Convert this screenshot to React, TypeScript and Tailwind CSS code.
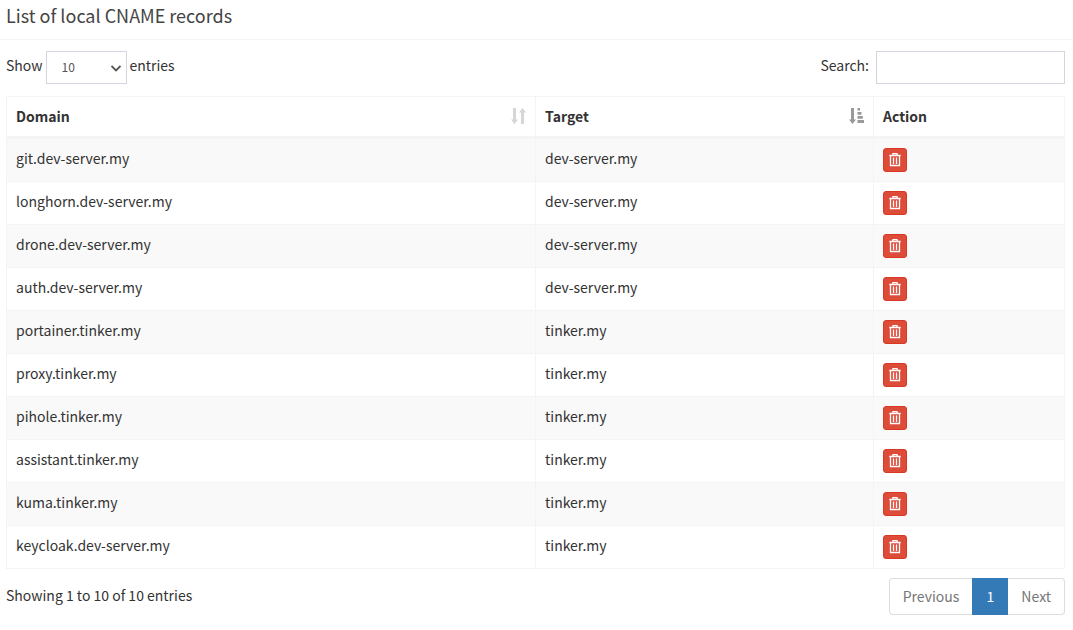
import { useState } from "react";

const records = [
  ["git.dev-server.my", "dev-server.my"],
  ["longhorn.dev-server.my", "dev-server.my"],
  ["drone.dev-server.my", "dev-server.my"],
  ["auth.dev-server.my", "dev-server.my"],
  ["portainer.tinker.my", "tinker.my"],
  ["proxy.tinker.my", "tinker.my"],
  ["pihole.tinker.my", "tinker.my"],
  ["assistant.tinker.my", "tinker.my"],
  ["kuma.tinker.my", "tinker.my"],
  ["keycloak.dev-server.my", "tinker.my"],
];

function SortBoth() {
  return (
    <svg width="15" height="16" viewBox="0 0 15 16" fill="#d6d6d6" aria-hidden="true">
      <path d="M2 0h3v11.500h2L3.500 16 0 11.500h2zM10 16h3V4.500h2L11.500 0 8 4.500h2z" />
    </svg>
  );
}

function SortAscending() {
  return (
    <svg width="15" height="16" viewBox="0 0 15 16" fill="#999999" aria-hidden="true">
      <path d="M2 0h3v11.500h2L3.500 16 0 11.500h2zM8.500 0h2.500v2.500H8.500zM8.500 4h4v2.700H8.500zM8.500 8h5.300v2.700H8.500zM8.500 12h6.500v2.900H8.500z" />
    </svg>
  );
}

function Trash() {
  return (
    <svg width="12" height="14" viewBox="0 0 12 14" fill="none" stroke="white" strokeWidth="1.300" aria-hidden="true">
      <path d="M.3 2.500h11.400M3.500 2.500l.5-1.800h4l.5 1.800M1.500 2.500v10h9v-10M4.500 4.500v6.500M7.500 4.500v6.500" />
    </svg>
  );
}

export default function App() {
  const [query, setQuery] = useState("");
  const rows = records.filter((r) => r.join(" ").includes(query));
  return (
    <main className="bg-white font-['Noto_Sans_CJK_SC',sans-serif] text-sm text-[#333333]">
      <header className="border-b border-[#f4f4f4] px-1.5 pt-0.5 pb-[11px]">
        <h1 className="text-lg leading-[26px] text-[#444444]">List of local CNAME records</h1>
      </header>
      <div className="pt-[11px] pr-2 pl-1.5">
        <div className="flex justify-between">
          <label className="flex gap-[3px] leading-7">
            Show
            <span className="relative">
              <select className="h-[33px] w-[81px] appearance-none border border-[#d2d6de] bg-white px-[15px] pb-0.5 text-xs text-[#555555]" defaultValue="10">
                <option>10</option>
                <option>25</option>
                <option>50</option>
                <option>100</option>
              </select>
              <svg className="pointer-events-none absolute top-3 right-1.5" width="10" height="10" viewBox="0 0 10 10" fill="none" stroke="#555555" strokeWidth="1.800" aria-hidden="true">
                <path d="M.5 3L5 7.500 9.500 3" />
              </svg>
            </span>
            entries
          </label>
          <label className="flex gap-[7px] leading-7">
            Search:
            <input type="search" value={query} onChange={(e) => setQuery(e.target.value)} className="h-[33px] w-[189px] border border-[#d2d6de] px-2 text-xs" />
          </label>
        </div>
        <table className="mt-3 w-full table-fixed border-separate border-spacing-0 border-b border-l border-[#f4f4f4] text-left">
          <thead>
            <tr className="h-[42px]">
              <th className="w-1/2 border-t border-r border-b-2 border-[#f4f4f4] px-[9px] pb-0.5">
                <div className="flex items-center justify-between">Domain <SortBoth /></div>
              </th>
              <th className="border-t border-r border-b-2 border-[#f4f4f4] px-[9px] pb-0.5">
                <div className="flex items-center justify-between">Target <SortAscending /></div>
              </th>
              <th className="w-[191px] border-t border-r border-b-2 border-[#f4f4f4] px-[9px] pb-0.5">Action</th>
            </tr>
          </thead>
          <tbody>
            {rows.map(([domain, target]) => (
              <tr key={domain} className="h-[43px] odd:bg-[#f9f9f9]">
                <td className="border-t border-r border-[#f4f4f4] px-[9px] pb-1">{domain}</td>
                <td className="border-t border-r border-[#f4f4f4] px-[9px] pb-1">{target}</td>
                <td className="border-t border-r border-[#f4f4f4] px-[9px]">
                  <button type="button" aria-label={`Delete ${domain}`} className="flex size-6 items-center justify-center rounded-[3px] border border-[#d73925] bg-[#dd4b39]">
                    <Trash />
                  </button>
                </td>
              </tr>
            ))}
          </tbody>
        </table>
        <div className="flex justify-between pt-[9px]">
          <p className="pt-[7px]">Showing 1 to 10 of 10 entries</p>
          <nav className="flex h-[37px] text-[#777777]" aria-label="Pages">
            <button type="button" className="rounded-l border border-r-0 border-[#dddddd] px-[13px] pb-0.5">Previous</button>
            <button type="button" className="w-9 bg-[#337ab7] pb-0.5 text-white">1</button>
            <button type="button" className="rounded-r border border-l-0 border-[#dddddd] px-[13px] pb-0.5">Next</button>
          </nav>
        </div>
      </div>
    </main>
  );
}
